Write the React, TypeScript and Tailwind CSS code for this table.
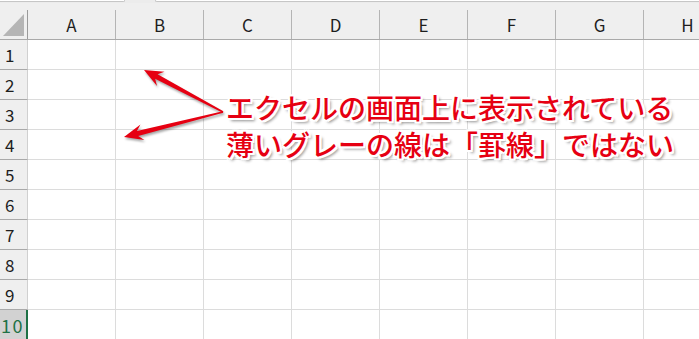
import React from "react";

const COLS = ["A", "B", "C", "D", "E", "F", "G", "H"];
const ROWS = [1, 2, 3, 4, 5, 6, 7, 8, 9, 10];

function arrowPoints(ox: number, oy: number, tx: number, ty: number) {
  const dx = tx - ox;
  const dy = ty - oy;
  const len = Math.hypot(dx, dy);
  const ux = dx / len;
  const uy = dy / len;
  const nx = -uy;
  const ny = ux;
  const p = (bx: number, by: number, along: number, side: number) =>
    `${(bx - ux * along + nx * side).toFixed(2)},${(by - uy * along + ny * side).toFixed(2)}`;
  return [
    p(ox, oy, 0, 0.8),
    p(tx, ty, 14, 2.6),
    p(tx, ty, 19, 8),
    p(tx, ty, 0, 0),
    p(tx, ty, 19, -8),
    p(tx, ty, 14, -2.6),
    p(ox, oy, 0, -0.8),
  ].join(" ");
}

export default function App() {
  return (
    <div className="relative w-[699px] h-[339px] overflow-hidden bg-white font-['Noto_Sans_CJK_JP','Noto_Sans',sans-serif]">
      {/* top strip */}
      <div className="flex h-[3px] bg-[#ececec]">
        <div className="w-[125px] h-[2px] bg-white border-b border-r border-[#c6c6c6] rounded-br-[3px]" />
        <div className="w-[30px]" />
        <div className="flex-1 h-[2px] bg-white border-b border-l border-[#c6c6c6] rounded-bl-[3px]" />
      </div>

      {/* column header */}
      <div className="flex h-[37px] bg-[#efefef] border-b border-[#a9a9a9]">
        <div className="flex shrink-0 w-[28px] h-full">
          <div className="flex-1 flex items-end pb-[3px] pl-[3px]">
            <svg width="21" height="22" viewBox="0 0 21 22">
              <polygon points="0,22 21,22 21,0" fill="#b5b5b5" />
            </svg>
          </div>
          <div className="w-px h-[29px] self-end bg-[#9a9a9a]" />
        </div>
        {COLS.map((c) => (
          <div key={c} className="flex shrink-0 w-[88px] h-full">
            <div className="flex-1 flex items-center justify-center pt-[7px] text-[17px] text-[#1e1e1e] leading-none">
              {c}
            </div>
            <div className="w-px h-[29px] self-end bg-[#b4b4b4]" />
          </div>
        ))}
      </div>

      {/* rows */}
      {ROWS.map((r) => {
        const sel = r === 10;
        return (
          <div key={r} className="flex h-[30px]">
            <div
              className={
                sel
                  ? "shrink-0 w-[28px] h-full flex items-center pl-[1px] bg-[#d2d2d2] border-r-2 border-[#1e7145] text-[#1e7145] text-[18px] tracking-[1.5px] leading-none"
                  : "shrink-0 w-[28px] h-full flex items-center pl-[5px] bg-[#efefef] border-b border-b-[#a9a9a9] border-r border-r-[#d0d0d0] text-[#1e1e1e] text-[17px] leading-none"
              }
            >
              {r}
            </div>
            {COLS.map((c) => (
              <div
                key={c}
                className="shrink-0 w-[88px] h-full border-r border-b border-[#dcdcdc]"
              />
            ))}
          </div>
        );
      })}

      {/* arrows */}
      <svg
        className="absolute left-0 top-0 pointer-events-none [filter:drop-shadow(1px_2px_1px_rgba(0,0,0,0.35))]"
        width="699"
        height="339"
        viewBox="0 0 699 339"
      >
        <polygon points={arrowPoints(223, 112, 144, 70)} fill="#e60012" />
        <polygon points={arrowPoints(223, 112, 124, 137)} fill="#e60012" />
      </svg>

      {/* annotation text */}
      <div className="absolute left-[226px] top-[89px] text-[28px] leading-[37px] font-medium text-[#e60012] whitespace-nowrap [text-shadow:2px_0_0_#fff,-2px_0_0_#fff,0_2px_0_#fff,0_-2px_0_#fff,2px_2px_0_#fff,-2px_-2px_0_#fff,2px_-2px_0_#fff,-2px_2px_0_#fff,3px_3px_3px_rgba(0,0,0,0.45)]">
        <div>エクセルの画面上に表示されている</div>
        <div>薄いグレーの線は「罫線」ではない</div>
      </div>
    </div>
  );
}
